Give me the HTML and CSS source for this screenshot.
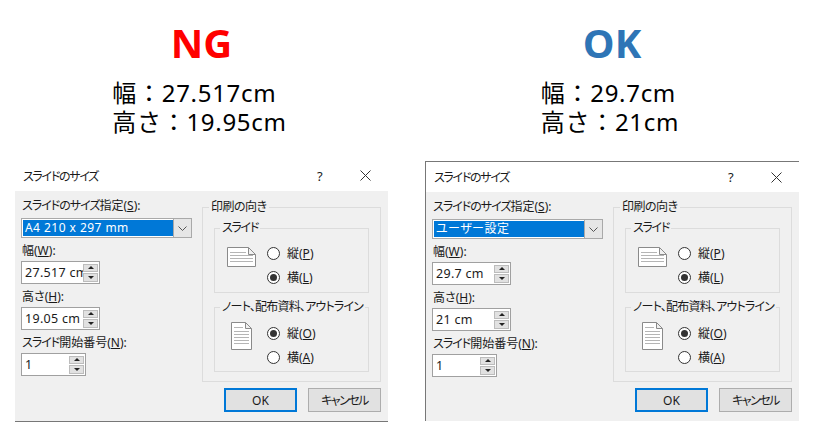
FILE: index.html
```html
<!DOCTYPE html>
<html lang="ja">
<head>
  <meta charset="UTF-8" />
  <meta name="viewport" content="width=device-width, initial-scale=1.0"/>
  <title>スライドのサイズ</title>
  <link rel="stylesheet" href="styles.css">
</head>
<body>
  <div class="page">

    <!-- NG -->
    <section class="panel panel-ng">
      <header class="summary">
        <h2 class="verdict ng">NG</h2>
        <p class="dims">幅：27.517cm<br>高さ：19.95cm</p>
      </header>
      <div class="dialog">
        <div class="titlebar">
          <span class="title">スライドのサイズ</span>
          <span class="help">?</span>
          <svg class="close" width="11" height="11" viewBox="0 0 11 11"><path d="M.5.5l10 10M10.5.5l-10 10" stroke="#333" fill="none"/></svg>
        </div>
        <div class="body">
          <div class="main">
            <div class="fields">
              <div class="label"><span class="kana">スライドのサイズ</span>指定(<u>S</u>):</div>
              <div class="combo">
                <div class="combo-value">A4 210 x 297 mm</div>
                <div class="combo-btn"><svg width="9" height="5" viewBox="0 0 9 5"><path d="M.5.5l4 4 4-4" stroke="#555" fill="none"/></svg></div>
              </div>
              <div class="label">幅(<u>W</u>):</div>
              <div class="spin"><span class="spin-value">27.517 cm</span><span class="spin-btns"><i class="up"></i><i class="down"></i></span></div>
              <div class="label">高さ(<u>H</u>):</div>
              <div class="spin"><span class="spin-value">19.05 cm</span><span class="spin-btns"><i class="up"></i><i class="down"></i></span></div>
              <div class="label"><span class="kana">スライド</span>開始番号(<u>N</u>):</div>
              <div class="spin spin-short"><span class="spin-value">1</span><span class="spin-btns"><i class="up"></i><i class="down"></i></span></div>
            </div>
            <fieldset class="group">
              <legend>印刷の向き</legend>
              <fieldset class="subgroup sub-slide">
                <legend>スライド</legend>
                <div class="orient">
                  <div class="doc-slot">
                    <svg class="doc" width="29" height="20" viewBox="0 0 29 20"><path d="M.5.5h21l7 7v12H.5zM21.5.5v7h7" fill="#fff" stroke="#8a8a8a"/><path d="M3 5.500h16M3 8.500h23M3 11.500h23M3 14.500h23" stroke="#b5b5b5"/></svg>
                  </div>
                  <div class="radios">
                    <div class="radio-row"><span class="radio"></span><span>縦(<u>P</u>)</span></div>
                    <div class="radio-row"><span class="radio checked"></span><span>横(<u>L</u>)</span></div>
                  </div>
                </div>
              </fieldset>
              <fieldset class="subgroup sub-note">
                <legend>ノート、配布資料、アウトライン</legend>
                <div class="orient">
                  <div class="doc-slot">
                    <svg class="doc" width="21" height="28" viewBox="0 0 21 28"><path d="M.5.500h14l6 6v21H.5zM14.500.500v6h6" fill="#fff" stroke="#8a8a8a"/><path d="M3 5.500h9M3 9.500h15M3 12.500h15M3 15.500h15M3 18.500h15M3 21.500h15" stroke="#b5b5b5"/></svg>
                  </div>
                  <div class="radios">
                    <div class="radio-row"><span class="radio checked"></span><span>縦(<u>O</u>)</span></div>
                    <div class="radio-row"><span class="radio"></span><span>横(<u>A</u>)</span></div>
                  </div>
                </div>
              </fieldset>
            </fieldset>
          </div>
          <div class="footer">
            <button class="btn btn-default">OK</button>
            <button class="btn btn-cancel">キャンセル</button>
          </div>
        </div>
      </div>
    </section>

    <!-- OK -->
    <section class="panel panel-ok">
      <header class="summary">
        <h2 class="verdict ok">OK</h2>
        <p class="dims">幅：29.7cm<br>高さ：21cm</p>
      </header>
      <div class="dialog">
        <div class="titlebar">
          <span class="title">スライドのサイズ</span>
          <span class="help">?</span>
          <svg class="close" width="11" height="11" viewBox="0 0 11 11"><path d="M.5.5l10 10M10.5.5l-10 10" stroke="#333" fill="none"/></svg>
        </div>
        <div class="body">
          <div class="main">
            <div class="fields">
              <div class="label"><span class="kana">スライドのサイズ</span>指定(<u>S</u>):</div>
              <div class="combo">
                <div class="combo-value">ユーザー設定</div>
                <div class="combo-btn"><svg width="9" height="5" viewBox="0 0 9 5"><path d="M.5.5l4 4 4-4" stroke="#555" fill="none"/></svg></div>
              </div>
              <div class="label">幅(<u>W</u>):</div>
              <div class="spin"><span class="spin-value">29.7 cm</span><span class="spin-btns"><i class="up"></i><i class="down"></i></span></div>
              <div class="label">高さ(<u>H</u>):</div>
              <div class="spin"><span class="spin-value">21 cm</span><span class="spin-btns"><i class="up"></i><i class="down"></i></span></div>
              <div class="label"><span class="kana">スライド</span>開始番号(<u>N</u>):</div>
              <div class="spin spin-short"><span class="spin-value">1</span><span class="spin-btns"><i class="up"></i><i class="down"></i></span></div>
            </div>
            <fieldset class="group">
              <legend>印刷の向き</legend>
              <fieldset class="subgroup sub-slide">
                <legend>スライド</legend>
                <div class="orient">
                  <div class="doc-slot">
                    <svg class="doc" width="29" height="20" viewBox="0 0 29 20"><path d="M.5.5h21l7 7v12H.5zM21.5.5v7h7" fill="#fff" stroke="#8a8a8a"/><path d="M3 5.500h16M3 8.500h23M3 11.500h23M3 14.500h23" stroke="#b5b5b5"/></svg>
                  </div>
                  <div class="radios">
                    <div class="radio-row"><span class="radio"></span><span>縦(<u>P</u>)</span></div>
                    <div class="radio-row"><span class="radio checked"></span><span>横(<u>L</u>)</span></div>
                  </div>
                </div>
              </fieldset>
              <fieldset class="subgroup sub-note">
                <legend>ノート、配布資料、アウトライン</legend>
                <div class="orient">
                  <div class="doc-slot">
                    <svg class="doc" width="21" height="28" viewBox="0 0 21 28"><path d="M.5.500h14l6 6v21H.5zM14.500.500v6h6" fill="#fff" stroke="#8a8a8a"/><path d="M3 5.500h9M3 9.500h15M3 12.500h15M3 15.500h15M3 18.500h15M3 21.500h15" stroke="#b5b5b5"/></svg>
                  </div>
                  <div class="radios">
                    <div class="radio-row"><span class="radio checked"></span><span>縦(<u>O</u>)</span></div>
                    <div class="radio-row"><span class="radio"></span><span>横(<u>A</u>)</span></div>
                  </div>
                </div>
              </fieldset>
            </fieldset>
          </div>
          <div class="footer">
            <button class="btn btn-default">OK</button>
            <button class="btn btn-cancel">キャンセル</button>
          </div>
        </div>
      </div>
    </section>

  </div>
</body>
</html>
```

FILE: styles.css
```css
* { box-sizing: border-box; }

body {
  margin: 0;
  background: #fff;
  color: #000;
  font-family: "Noto Sans", "Noto Sans CJK JP", sans-serif;
  overflow: hidden;
}

.page { display: flex; gap: 37px; padding-left: 15px; }

.panel { display: flex; flex-direction: column; }
.panel-ng { width: 373px; }
.panel-ok { width: 374px; }

/* Heading above each dialog */
.summary {
  height: 158px;
  padding-top: 21px;
  display: flex;
  flex-direction: column;
  align-items: center;
}
.verdict {
  margin: 0;
  font-size: 40px;
  line-height: 44px;
  font-weight: 700;
  font-family: "Open Sans", sans-serif;
}
.ng { color: #ff0000; }
.ok { color: #2e75b6; }
.dims {
  margin: 13px 4px 0 0;
  font-size: 24px;
  line-height: 29px;
  letter-spacing: .7px;
  font-family: "Noto Sans", "Noto Sans CJK JP", sans-serif;
}

/* Dialog */
.dialog { font-size: 12px; font-feature-settings: "palt"; color: #1a1a1a; }
.panel-ok .dialog {
  margin-top: 3px;
  border-top: 1px solid #777;
  border-left: 1px solid #777;
}

.titlebar { height: 33px; display: flex; align-items: center; padding: 2px 0 0 8px; }
.panel-ok .titlebar { height: 30px; padding-top: 0; }
.title { flex: 1; letter-spacing: -1.3px; }
.help { width: 43px; font-size: 13px; }
.close { margin-right: 17px; }

.body { background: #f0f0f0; padding: 0 7px 9px 6px; }
.panel-ng .body { border-bottom: 1px solid #777; }

.main { display: flex; }
.fields { width: 181px; flex: none; padding-top: 4px; }

.label { height: 20px; line-height: 20px; padding: 1px 0 0 1px; white-space: nowrap; }
.kana { letter-spacing: -1px; }

.combo {
  width: 171px;
  height: 20px;
  margin: 3px 0 2px;
  display: flex;
  border: 1px solid #a9a9a9;
  background: #fff;
}
.combo-value {
  flex: 1;
  margin: 1px 0 1px 1px;
  padding-left: 2px;
  background: #0078d7;
  color: #fff;
  line-height: 16px;
  font-size: 12px;
  letter-spacing: .45px;
}
.combo-btn {
  width: 18px;
  display: flex;
  align-items: center;
  justify-content: center;
  background: #e6e6e6;
  border-left: 1px solid #a9a9a9;
}

.spin {
  width: 79px;
  height: 23px;
  margin: 1px 0 2px;
  display: flex;
  align-items: center;
  padding: 0 1px 0 3px;
  border: 1px solid #a0a0a0;
  background: #fff;
}
.spin-short { width: 65px; }
.spin-value { flex: 1; min-width: 0; overflow: hidden; white-space: nowrap; font-size: 12.5px; letter-spacing: .3px; }
.spin-btns { flex: none; width: 15px; height: 18px; display: flex; flex-direction: column; gap: 1px; }
.spin-btns i { flex: 1; display: flex; align-items: center; justify-content: center; background: #e1e1e1; border: 1px solid #bcbcbc; }
.up::before { content: ""; border: 3px solid transparent; border-top: 0; border-bottom: 3px solid #222; }
.down::before { content: ""; border: 3px solid transparent; border-bottom: 0; border-top: 3px solid #222; }

/* Group boxes */
fieldset { margin: 0; min-width: 0; border: 1px solid #dcdcdc; }
legend { height: 14px; line-height: 14px; padding: 0 2px; letter-spacing: -.8px; }

.group { width: 180px; margin-top: 9px; padding: 7px 11px 9px; }
.panel-ok .group { margin-top: 8px; }
.group > legend { margin-left: -5px; letter-spacing: -.5px; }
.subgroup { padding: 0; }
.subgroup > legend { margin-left: 5px; white-space: nowrap; }
.sub-slide legend { letter-spacing: -1.3px; }
.sub-slide { height: 72px; }
.sub-note { height: 72px; margin-top: 7px; }

.orient { display: flex; }
.sub-slide .orient { padding-top: 6px; }
.sub-note .orient { padding-top: 7px; }
.doc-slot { width: 52px; display: flex; justify-content: center; align-items: flex-start; flex: none; }
.sub-slide .doc { margin-top: 6px; }
.sub-note .doc { margin-top: 1px; }

.radio-row { height: 24px; display: flex; align-items: center; gap: 7px; }
.radio {
  width: 13px;
  height: 13px;
  display: flex;
  align-items: center;
  justify-content: center;
  border: 1px solid #333;
  border-radius: 50%;
  background: #fff;
}
.checked::before { content: ""; width: 7px; height: 7px; border-radius: 50%; background: #333; }

/* Buttons */
.footer { display: flex; justify-content: flex-end; gap: 11px; margin-top: 6px; }
.btn {
  width: 73px;
  height: 24px;
  padding: 0;
  font: inherit;
  color: #1a1a1a;
  background: #e1e1e1;
  border: 1px solid #adadad;
}
.btn-default { border: 2px solid #0078d7; }
.btn-cancel { letter-spacing: -1.5px; }
```
